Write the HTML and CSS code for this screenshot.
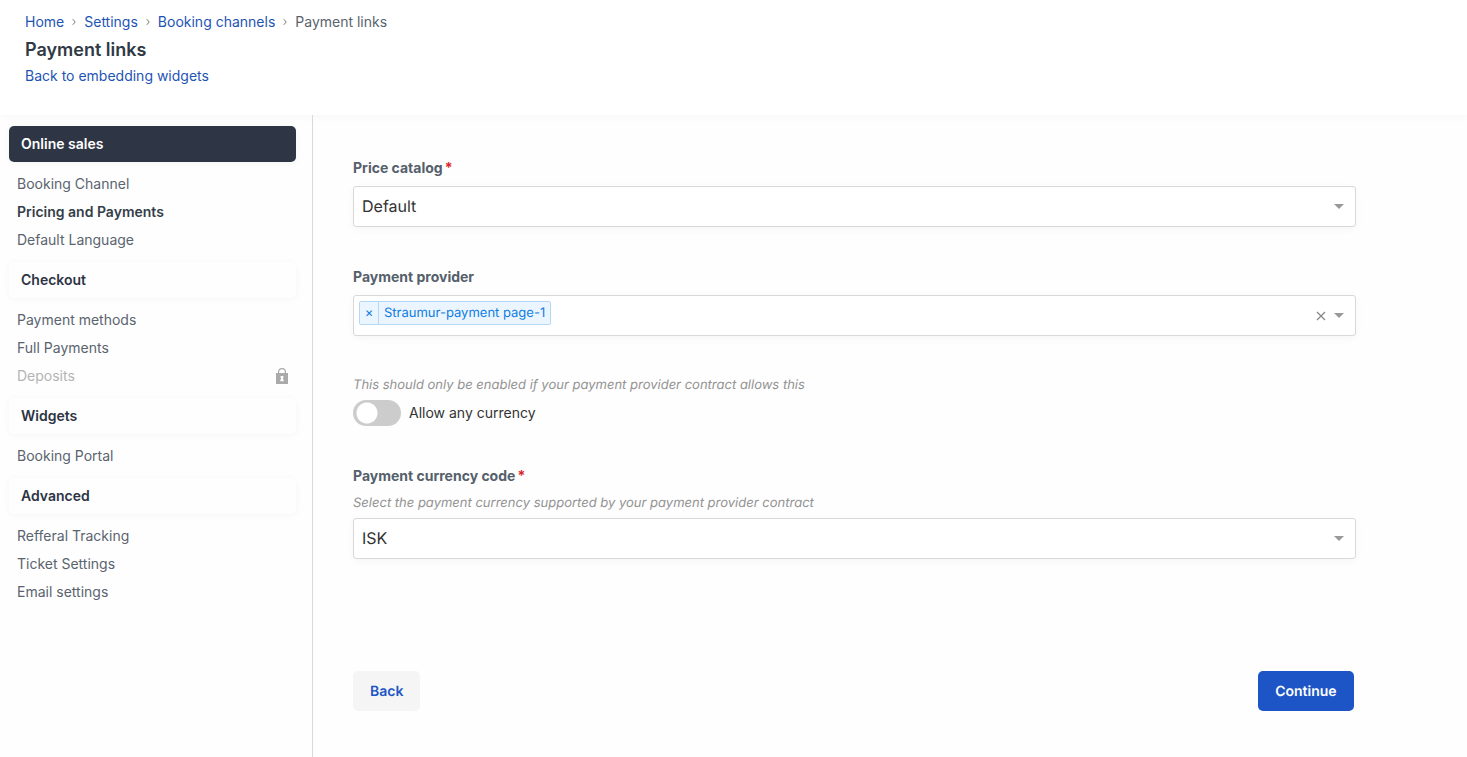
FILE: index.html
```html
<!DOCTYPE html>
<html lang="en">

<head>
    <meta charset="utf-8">
    <meta name="viewport" content="width=device-width, initial-scale=1.0">
    <title>Payment links</title>
    <link rel="stylesheet" href="styles.css">
</head>

<body>

    <header class="page-header">
        <nav class="breadcrumb">
            <a href="#">Home</a>
            <svg class="sep" viewBox="0 0 4 8"><path d="M.8 1.2 3.2 4 .8 6.8" /></svg>
            <a href="#">Settings</a>
            <svg class="sep" viewBox="0 0 4 8"><path d="M.8 1.2 3.2 4 .8 6.8" /></svg>
            <a href="#">Booking channels</a>
            <svg class="sep" viewBox="0 0 4 8"><path d="M.8 1.2 3.2 4 .8 6.8" /></svg>
            <span>Payment links</span>
        </nav>
        <h1>Payment links</h1>
        <a href="#">Back to embedding widgets</a>
    </header>

    <div class="layout">

        <nav class="sidebar">
            <h2 class="active">Online sales</h2>
            <ul>
                <li><a href="#">Booking Channel</a></li>
                <li><a href="#" class="current">Pricing and Payments</a></li>
                <li><a href="#">Default Language</a></li>
            </ul>

            <h2>Checkout</h2>
            <ul>
                <li><a href="#">Payment methods</a></li>
                <li><a href="#">Full Payments</a></li>
                <li>
                    <a href="#" class="locked">Deposits
                        <svg class="lock" viewBox="0 0 12 16">
                            <path class="shackle" d="M2.6 6V4a3.4 3.4 0 0 1 6.8 0v2" />
                            <path class="case" fill-rule="evenodd" d="M0 5h12v11H0zM4.6 8h2.8v2h-.4v1.6h.7v1.6H4.3v-1.6H5V10h-.4z" />
                        </svg>
                    </a>
                </li>
            </ul>

            <h2>Widgets</h2>
            <ul>
                <li><a href="#">Booking Portal</a></li>
            </ul>

            <h2>Advanced</h2>
            <ul>
                <li><a href="#">Refferal Tracking</a></li>
                <li><a href="#">Ticket Settings</a></li>
                <li><a href="#">Email settings</a></li>
            </ul>
        </nav>

        <main>
            <form>
                <div class="field">
                    <label for="catalog">Price catalog<span class="required">*</span></label>
                    <div class="box">
                        <select id="catalog">
                            <option>Default</option>
                        </select>
                        <span class="caret"></span>
                    </div>
                </div>

                <div class="field">
                    <label for="provider">Payment provider</label>
                    <div class="box multi">
                        <div class="tag">
                            <button type="button" aria-label="Remove">×</button>
                            <span>Straumur-payment page-1</span>
                        </div>
                        <input type="text" id="provider">
                        <button type="button" class="clear" aria-label="Clear">
                            <svg viewBox="0 0 10 10"><path d="M1 1l8 8M9 1 1 9" /></svg>
                        </button>
                        <span class="caret"></span>
                    </div>
                </div>

                <div class="field">
                    <p class="hint">This should only be enabled if your payment provider contract allows this</p>
                    <div class="toggle">
                        <input type="checkbox" id="any-currency">
                        <label for="any-currency">Allow any currency</label>
                    </div>
                </div>

                <div class="field">
                    <label for="currency">Payment currency code<span class="required">*</span></label>
                    <p class="hint">Select the payment currency supported by your payment provider contract</p>
                    <div class="box">
                        <select id="currency">
                            <option>ISK</option>
                        </select>
                        <span class="caret"></span>
                    </div>
                </div>

                <div class="actions">
                    <button type="button" class="btn">Back</button>
                    <button type="submit" class="btn primary">Continue</button>
                </div>
            </form>
        </main>

    </div>

</body>

</html>
```
FILE: styles.css
```css
* {
    box-sizing: border-box;
}

body {
    margin: 0;
    min-height: 100vh;
    display: flex;
    flex-direction: column;
    background: #fefefe;
    color: #333;
    font-family: Inter, sans-serif;
    font-size: 14px;
    line-height: 20px;
}

a {
    color: #1d54b4;
    text-decoration: none;
}

button,
input,
select {
    font-family: inherit;
    margin: 0;
}

button,
select,
.hint,
.tag {
    text-rendering: geometricPrecision;
}

/* header */

.page-header {
    padding: 12px 25px 29px;
    background: #fff;
    box-shadow: 0 2px 8px rgba(0, 0, 0, .03);
}

.breadcrumb {
    display: flex;
    align-items: center;
    gap: 8px;
    color: #5a646e;
}

.sep {
    width: 4px;
    height: 8px;
    fill: none;
    stroke: #777;
}

.page-header h1 {
    margin: 4px 0 2px;
    font-size: 18px;
    font-weight: 600;
    line-height: 28px;
    color: #2f3a45;
}

/* sidebar */

.layout {
    flex: 1;
    display: flex;
}

.sidebar {
    width: 313px;
    padding: 11px 16px 16px 9px;
    border-right: 1px solid #d9d9d9;
}

.sidebar h2 {
    margin: 0;
    padding: 8px 12px;
    border-radius: 5px;
    box-shadow: 0 1px 8px rgba(0, 0, 0, .04);
    font-size: 14px;
    font-weight: 600;
    color: #2d3444;
}

.sidebar h2.active {
    background: #2e3545;
    color: #fff;
}

.sidebar ul {
    margin: 8px 0;
    padding: 0;
    list-style: none;
}

.sidebar a {
    display: flex;
    align-items: center;
    justify-content: space-between;
    padding: 4px 8px;
    color: #5a646e;
}

.sidebar .current {
    font-weight: 600;
    color: #343e49;
}

.sidebar .locked {
    color: #b4b4b4;
}

.lock {
    width: 12px;
    height: 16px;
    fill: #aaa;
}

.lock .shackle {
    fill: none;
    stroke: #aaa;
    stroke-width: 1.2;
}

/* form */

main {
    flex: 1;
    padding: 43px 0 40px 40px;
}

form {
    width: 90%;
}

.field {
    margin-bottom: 40px;
}

.field > label {
    display: block;
    margin-bottom: 8px;
    font-weight: 700;
    color: #55606b;
}

.required {
    margin-left: 2px;
    color: #d9262c;
}

.hint {
    margin: 0 0 6px;
    font-size: 13px;
    font-style: italic;
    line-height: 18px;
    color: #939393;
}

.box {
    display: flex;
    align-items: center;
    height: 41px;
    padding-right: 11px;
    border: 1px solid #d9d9d9;
    border-radius: 3px;
    background: #fff;
    box-shadow: 0 2px 8px rgba(0, 0, 0, .04);
}

.box select {
    flex: 1;
    height: 100%;
    padding: 0 8px 2px;
    border: 0;
    background: none;
    appearance: none;
    font-size: 16px;
    color: #333;
}

.caret {
    border: 5px solid transparent;
    border-top-color: #999;
    border-bottom: 0;
}

.tag {
    align-self: flex-start;
    display: flex;
    height: 24px;
    margin: 5px;
    border: 1px solid #b5d9f5;
    border-radius: 2px;
    background: #ebf5ff;
    color: #0f7ee0;
    font-size: 13px;
    line-height: 22px;
}

.tag button {
    width: 19px;
    padding: 0;
    border: 0;
    border-right: 1px solid #b5d9f5;
    background: none;
    color: inherit;
    font-size: 13px;
}

.tag span {
    padding: 0 5px;
}

.multi input {
    flex: 1;
    min-width: 0;
    border: 0;
    outline: 0;
    background: none;
    font-size: 16px;
}

.clear {
    display: flex;
    padding: 0;
    margin-right: 8px;
    border: 0;
    background: none;
}

.clear svg {
    width: 10px;
    height: 10px;
    stroke: #888;
    stroke-width: 1.3;
}

.toggle {
    display: flex;
    align-items: center;
    gap: 8px;
}

.toggle input {
    appearance: none;
    width: 48px;
    height: 26px;
    border-radius: 13px;
    background: radial-gradient(circle at 14px 13px, #fff 10px, #ccc 11px);
}

.toggle input:checked {
    background: radial-gradient(circle at 34px 13px, #fff 10px, #1d55c6 11px);
}

.actions {
    display: flex;
    justify-content: space-between;
    margin: 112px 2px 0 0;
}

.btn {
    height: 40px;
    padding: 0 17px;
    border: 0;
    border-radius: 5px;
    background: #f5f5f5;
    color: #1d55c6;
    font-size: 14px;
    font-weight: 600;
}

.btn.primary {
    background: #1d55c6;
    color: #fff;
}
```
